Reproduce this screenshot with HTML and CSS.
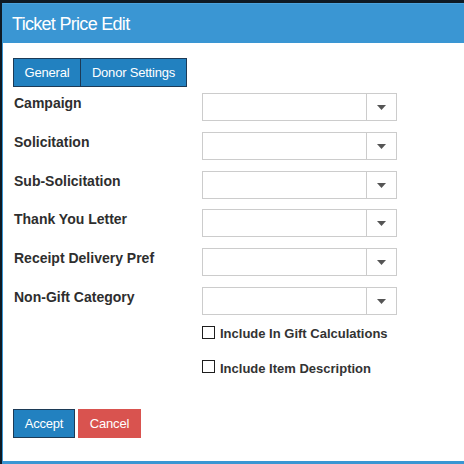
FILE: index.html
```html
<!DOCTYPE html>
<html>
<head>
<meta charset="utf-8">
<link rel="stylesheet" href="styles.css">
</head>
<body>
<div class="dialog">
  <div class="header">Ticket Price Edit</div>
  <div class="content">
    <div class="tabs">
      <button class="tab tab-general">General</button>
      <button class="tab tab-donor">Donor Settings</button>
    </div>
    <div class="form">
      <div class="row"><div class="label">Campaign</div><div class="select"><div class="value"></div><div class="arrow"><svg width="9" height="5" viewBox="0 0 9 5"><path d="M0 0H9L4.5 5Z"/></svg></div></div></div>
      <div class="row"><div class="label">Solicitation</div><div class="select"><div class="value"></div><div class="arrow"><svg width="9" height="5" viewBox="0 0 9 5"><path d="M0 0H9L4.5 5Z"/></svg></div></div></div>
      <div class="row"><div class="label">Sub-Solicitation</div><div class="select"><div class="value"></div><div class="arrow"><svg width="9" height="5" viewBox="0 0 9 5"><path d="M0 0H9L4.5 5Z"/></svg></div></div></div>
      <div class="row"><div class="label">Thank You Letter</div><div class="select"><div class="value"></div><div class="arrow"><svg width="9" height="5" viewBox="0 0 9 5"><path d="M0 0H9L4.5 5Z"/></svg></div></div></div>
      <div class="row"><div class="label">Receipt Delivery Pref</div><div class="select"><div class="value"></div><div class="arrow"><svg width="9" height="5" viewBox="0 0 9 5"><path d="M0 0H9L4.5 5Z"/></svg></div></div></div>
      <div class="row"><div class="label">Non-Gift Category</div><div class="select"><div class="value"></div><div class="arrow"><svg width="9" height="5" viewBox="0 0 9 5"><path d="M0 0H9L4.5 5Z"/></svg></div></div></div>
      <div class="checks">
        <div class="check"><span class="box"></span><span class="check-text">Include In Gift Calculations</span></div>
        <div class="check"><span class="box"></span><span class="check-text">Include Item Description</span></div>
      </div>
    </div>
    <div class="actions">
      <button class="btn btn-accept">Accept</button>
      <button class="btn btn-cancel">Cancel</button>
    </div>
  </div>
  <div class="footer"></div>
</div>
</body>
</html>
```
FILE: styles.css
```css
html, body {
  margin: 0;
  padding: 0;
}
body {
  background: #0e1a24;
  font-family: "Liberation Sans", Arial, sans-serif;
  width: 464px;
  height: 464px;
  overflow: hidden;
}
.dialog {
  margin: 3px 0 0 2px;
  width: 480px;
  background: #fff;
  border-top: 1px solid #4aa2dc;
  border-left: 1px solid #3a96d3;
}
.header {
  height: 39px;
  box-sizing: border-box;
  background: #3a96d3;
  color: #fff;
  font-size: 18px;
  line-height: 22px;
  letter-spacing: -0.7px;
  padding: 9px 0 0 9px;
}
.content {
  display: flex;
  flex-direction: column;
  padding: 15px 10px 23px 10px;
}
.tabs {
  display: flex;
}
.tab {
  box-sizing: border-box;
  height: 29px;
  margin: 0;
  padding: 0;
  background: #2281c0;
  color: #fff;
  font-family: "Liberation Sans", Arial, sans-serif;
  font-size: 13px;
  letter-spacing: -0.2px;
  border: 1px solid #1c3a56;
  border-radius: 0;
}
.tab-general {
  width: 68px;
}
.tab-donor {
  width: 106px;
  border-left: 0;
}
.form {
  display: flex;
  flex-direction: column;
  gap: 10.8px;
  margin-top: 6px;
}
.row {
  display: flex;
  align-items: flex-start;
}
.label {
  width: 189px;
  font-size: 14px;
  line-height: 20px;
  font-weight: bold;
  color: #2e2e2e;
  padding-left: 1px;
  box-sizing: border-box;
}
.select {
  display: flex;
  width: 195px;
  height: 28px;
  box-sizing: border-box;
  border: 1px solid #cccccc;
  background: #fff;
}
.value {
  flex: 1;
}
.arrow {
  width: 29px;
  border-left: 1px solid #cccccc;
  display: flex;
  align-items: center;
  justify-content: center;
}
.arrow svg {
  fill: #555;
  display: block;
  margin-top: 1px;
}
.checks {
  display: flex;
  flex-direction: column;
  gap: 20px;
  margin-left: 189px;
}
.check {
  display: flex;
  align-items: flex-start;
}
.box {
  width: 13px;
  height: 13px;
  box-sizing: border-box;
  border: 1px solid #1e1e1e;
  background: #fff;
}
.check-text {
  margin-left: 5px;
  margin-top: 1.5px;
  font-size: 13px;
  line-height: 13px;
  font-weight: bold;
  color: #333;
}
.actions {
  display: flex;
  gap: 3px;
  margin-top: 34px;
}
.btn {
  box-sizing: border-box;
  height: 29px;
  margin: 0;
  padding: 0;
  color: #fff;
  font-family: "Liberation Sans", Arial, sans-serif;
  font-size: 13px;
  letter-spacing: -0.2px;
  border-radius: 0;
}
.btn-accept {
  width: 62px;
  background: #2281c0;
  border: 1px solid #1c3a56;
}
.btn-cancel {
  width: 63px;
  background: #d9534f;
  border: 1px solid #d9534f;
}
.footer {
  height: 10px;
  background: #3a96d3;
}
```
